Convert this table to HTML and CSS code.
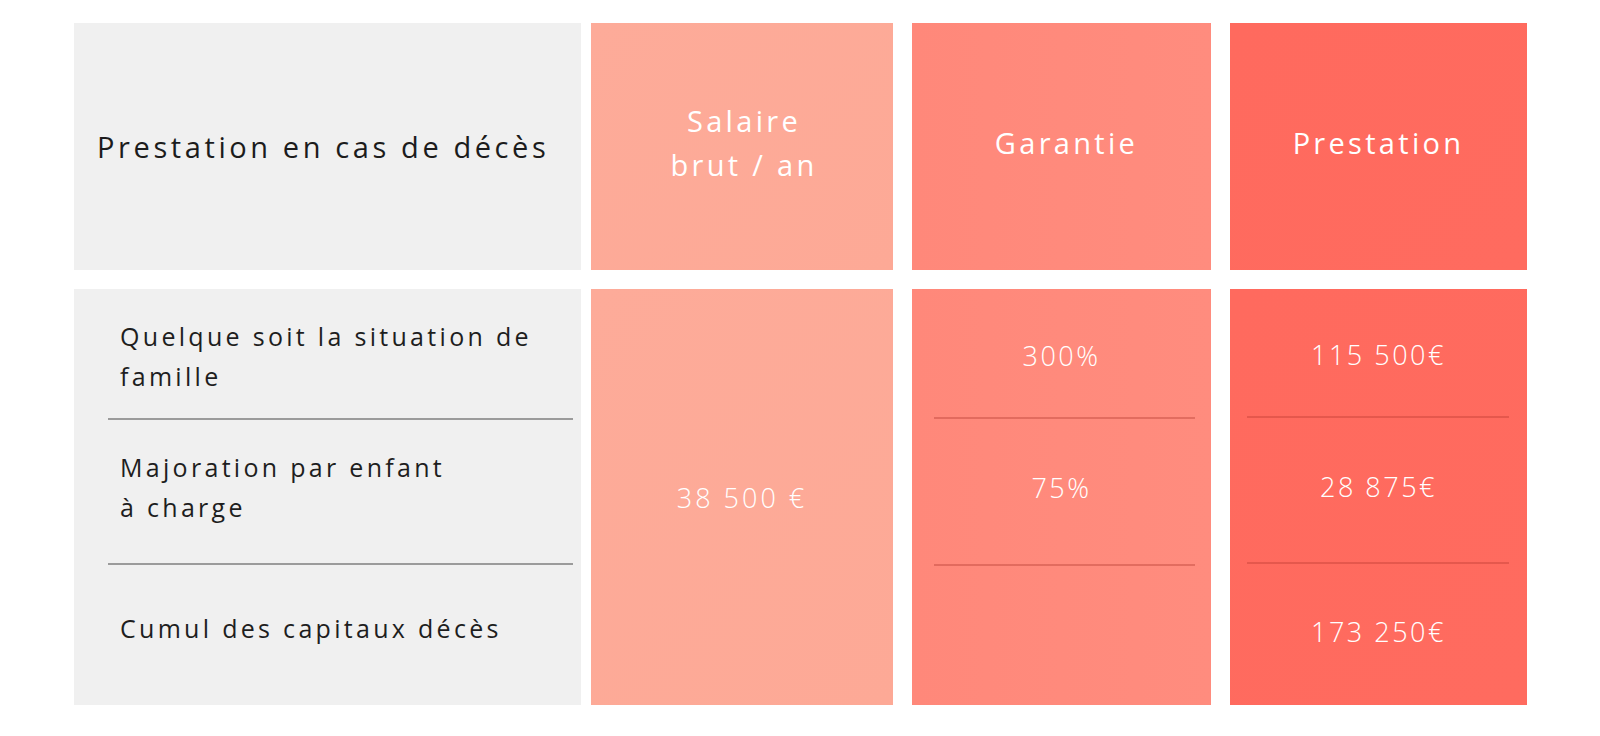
FILE: index.html
```html
<!DOCTYPE html>
<html lang="fr">
<head>
<meta charset="utf-8">
<title>Prestation en cas de décès</title>
<link rel="stylesheet" href="styles.css">
</head>
<body>
<div class="table">
  <div class="row head">
    <div class="cell label-col head-label">Prestation en cas de décès</div>
    <div class="cell sal-col head-title head-sal">Salaire<br>brut / an</div>
    <div class="cell gar-col head-title head-gar">Garantie</div>
    <div class="cell pre-col head-title">Prestation</div>
  </div>
  <div class="row body">
    <div class="cell label-col labels">
      <div class="lab lab-1">Quelque soit la situation de<br>famille</div>
      <div class="sep-gray"></div>
      <div class="lab lab-2">Majoration par enfant<br>à charge</div>
      <div class="sep-gray"></div>
      <div class="lab lab-3">Cumul des capitaux décès</div>
    </div>
    <div class="cell sal-col value-single">38 500 €</div>
    <div class="cell gar-col values">
      <div class="val v1">300%</div>
      <div class="sep-red sep-gar"></div>
      <div class="val v2">75%</div>
      <div class="sep-red sep-gar"></div>
      <div class="val v3"></div>
    </div>
    <div class="cell pre-col values">
      <div class="val v1 pv1">115 500€</div>
      <div class="sep-red sep-pre"></div>
      <div class="val v2 pv2">28 875€</div>
      <div class="sep-red sep-pre"></div>
      <div class="val v3">173 250€</div>
    </div>
  </div>
</div>
</body>
</html>
```

FILE: styles.css
```css
html, body {
  margin: 0;
  padding: 0;
  background: #ffffff;
}
body {
  font-family: "Open Sans", "Noto Sans", sans-serif;
}
.table {
  padding: 23px 0 0 74px;
}
.row {
  display: flex;
}
.head {
  height: 247px;
}
.body {
  height: 416px;
  margin-top: 19px;
}
.label-col {
  width: 507px;
  background: #f0f0f0;
}
.sal-col {
  width: 302px;
  margin-left: 10px;
  background: linear-gradient(135deg, #fdab99 0%, #fda996 100%);
}
.gar-col {
  width: 299px;
  margin-left: 19px;
  background: linear-gradient(90deg, #ff887a 0%, #ff8c7e 100%);
}
.pre-col {
  width: 297px;
  margin-left: 19px;
  background: linear-gradient(135deg, #ff6a5e 0%, #ff6b5f 100%);
}
.head-label {
  display: flex;
  align-items: center;
  padding-left: 23px;
  box-sizing: border-box;
  font-size: 29px;
  letter-spacing: 3.6px;
  color: #1c1c1c;
  white-space: nowrap;
}
.head-title {
  display: flex;
  align-items: center;
  justify-content: center;
  text-align: center;
  padding-bottom: 8px;
  box-sizing: border-box;
  color: #ffffff;
  font-size: 29px;
  line-height: 44px;
  letter-spacing: 3.3px;
}
.head-sal {
  padding-left: 4px;
}
.head-gar {
  padding-left: 10px;
}
.labels {
  display: flex;
  flex-direction: column;
  color: #1e1e1e;
  font-size: 25px;
  line-height: 40px;
  letter-spacing: 3.3px;
}
.lab {
  padding-left: 46px;
  box-sizing: border-box;
  white-space: nowrap;
}
.lab-1 {
  height: 129px;
  padding-top: 27px;
}
.lab-2 {
  height: 143px;
  padding-top: 27px;
}
.lab-3 {
  flex: 1;
  padding-top: 43px;
}
.sep-gray {
  height: 2px;
  margin: 0 8px 0 34px;
  background: #9b9b9b;
}
.value-single {
  display: flex;
  align-items: center;
  justify-content: center;
  color: #ffffff;
  font-size: 27px;
  font-weight: 300;
  letter-spacing: 3px;
}
.values {
  display: flex;
  flex-direction: column;
  color: #ffffff;
  font-size: 27px;
  font-weight: 300;
  letter-spacing: 2.5px;
}
.val {
  display: flex;
  align-items: center;
  justify-content: center;
  box-sizing: border-box;
}
.v1 {
  height: 128px;
  padding-top: 4px;
}
.v2 {
  height: 145px;
  padding-bottom: 8px;
}
.pv1 {
  height: 127px;
}
.pv2 {
  height: 144px;
}
.v3 {
  flex: 1;
  padding-bottom: 6px;
}
.sep-red {
  height: 2px;
}
.sep-gar {
  margin: 0 16px 0 22px;
  background: rgba(190, 70, 60, 0.45);
}
.sep-pre {
  margin: 0 18px 0 17px;
  background: rgba(190, 60, 50, 0.4);
}
```
